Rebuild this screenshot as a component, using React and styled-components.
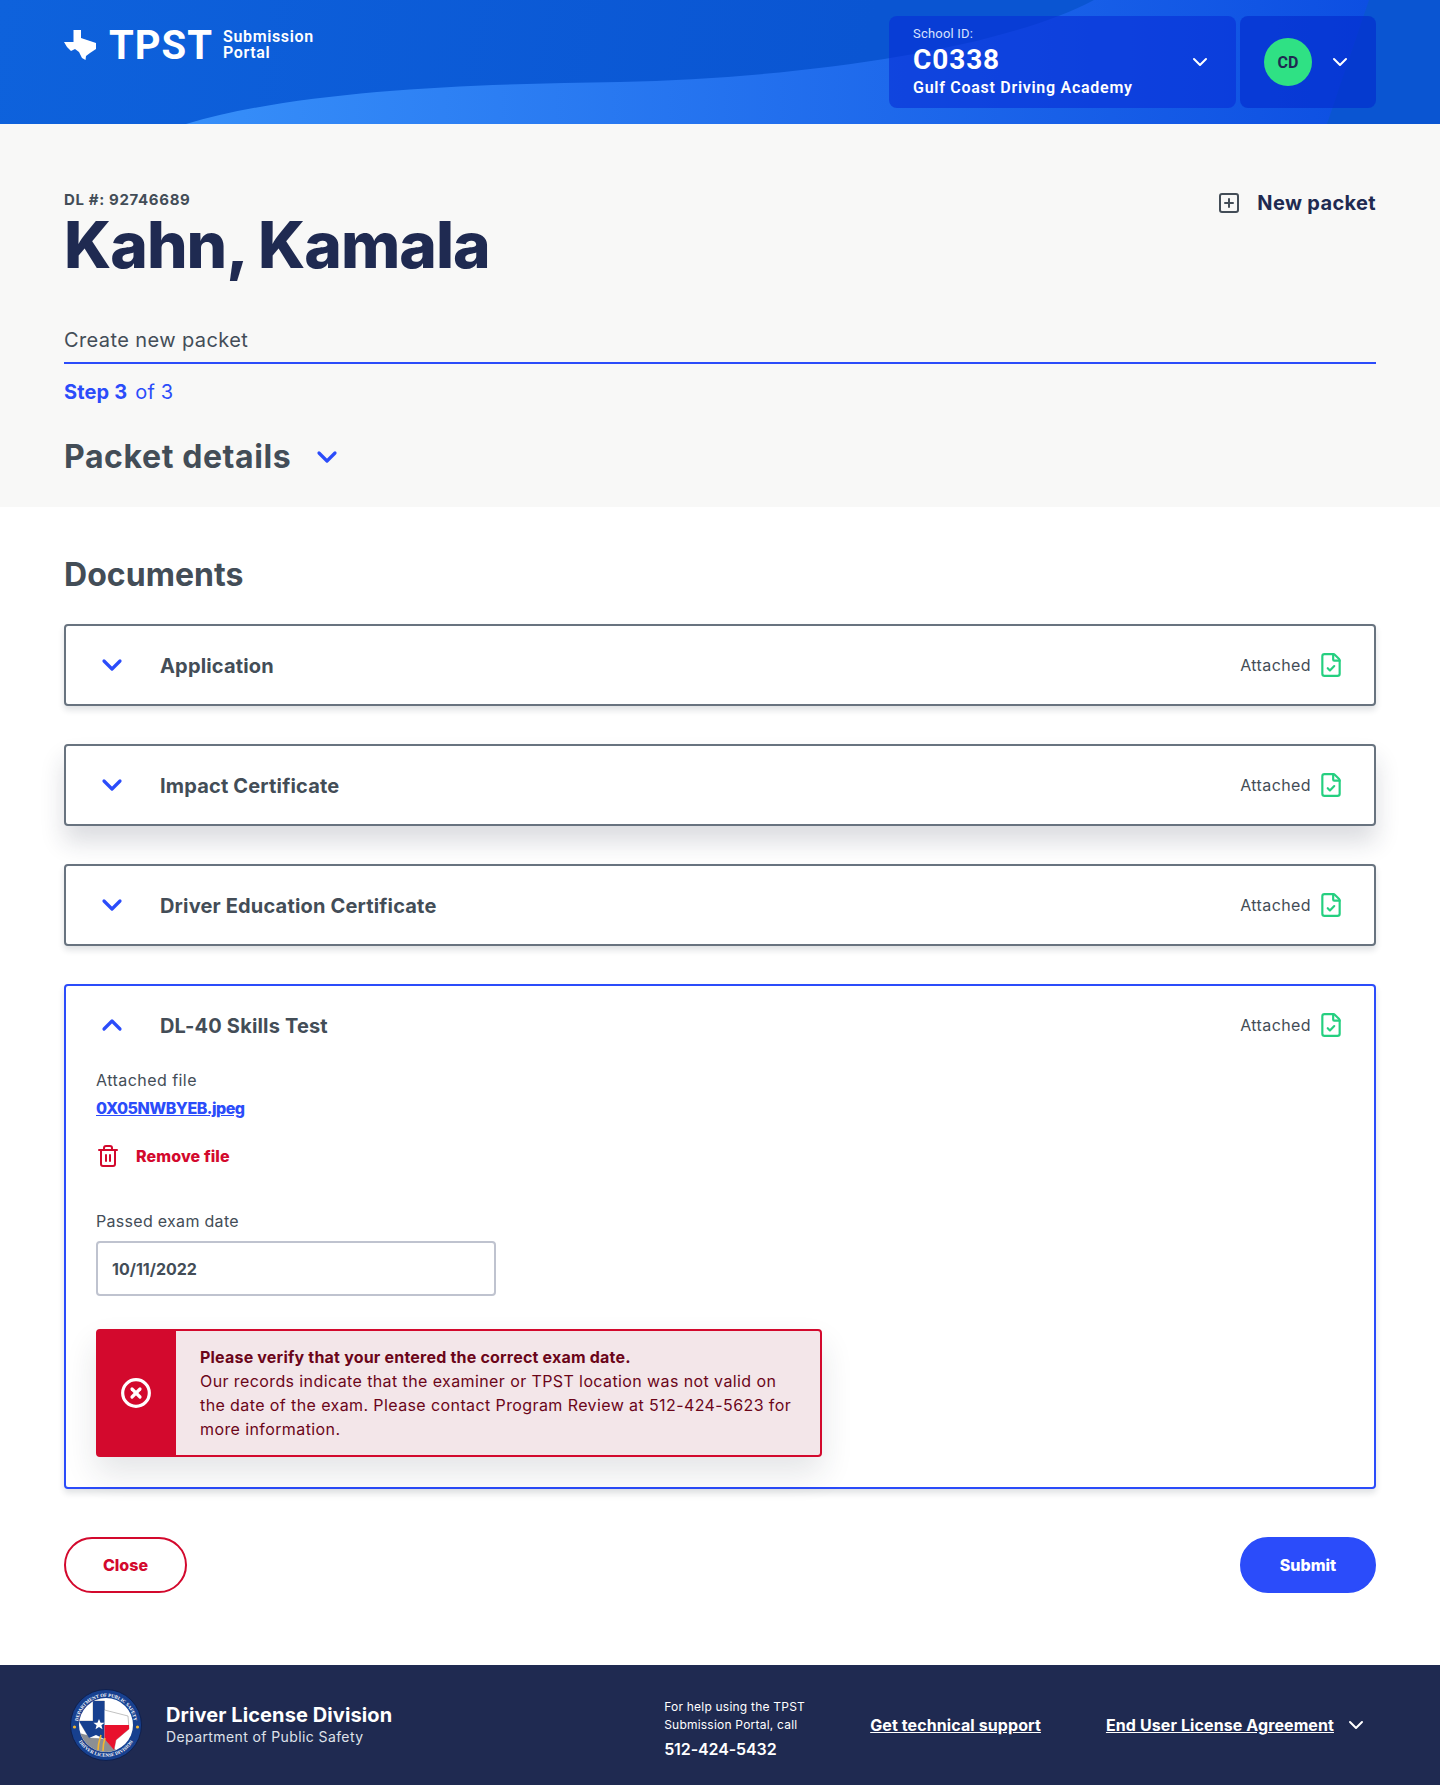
import React from "react"
import styled, { createGlobalStyle } from "styled-components"
import { ChevronDown, ChevronUp, CircleX, FileCheck, SquarePlus, Trash2 } from "lucide-react"

const body = `"Inter", "Liberation Sans", sans-serif`
const plex = `"Roboto", "Liberation Sans", sans-serif`

const Global = createGlobalStyle`
  * { box-sizing: border-box; }
  html, body { margin: 0; padding: 0; background: #fff; }
  body { font-family: ${body}; color: #434d57; }
`

const Page = styled.div`
  width: 1440px;
  height: 1785px;
  display: flex;
  flex-direction: column;
  overflow: hidden;
`

const Header = styled.header`
  position: relative;
  height: 124px;
  flex: none;
  padding: 16px 64px 0;
  display: flex;
  justify-content: space-between;
  align-items: flex-start;
  background: linear-gradient(100deg, #0e62dc 0%, #0a55d2 60%, #0a55d2 100%);
  overflow: hidden;
`

const HeaderWave = styled.svg`
  position: absolute;
  inset: 0;
`

const Logo = styled.div`
  position: relative;
  display: flex;
  align-items: center;
  height: 28px;
  margin-top: 15px;
`

const LogoMark = styled.svg`
  width: 32px;
  height: 30px;
  margin-right: 13px;
  flex: none;
`

const LogoName = styled.div`
  font-family: ${plex};
  font-weight: 700;
  font-size: 40px;
  line-height: 28px;
  color: #fff;
  letter-spacing: 1px;
  padding-top: 2px;
`

const LogoSub = styled.div`
  font-family: ${plex};
  font-weight: 600;
  font-size: 16px;
  line-height: 16px;
  color: #fff;
  margin-left: 10px;
  letter-spacing: 0.65px;
`

const HeaderControls = styled.div`
  position: relative;
  display: flex;
  gap: 4px;
`

const SchoolBox = styled.div`
  width: 347px;
  height: 92px;
  border-radius: 8px;
  background: rgba(8, 46, 214, 0.62);
  padding: 0 24px;
  display: flex;
  justify-content: space-between;
  align-items: center;
  color: #fff;
  font-family: ${plex};
`

const SchoolText = styled.div`
  display: flex;
  flex-direction: column;
  padding-top: 1px;
`

const SchoolLabel = styled.div`
  font-size: 13px;
  line-height: 14px;
  color: #d8e2ff;
  letter-spacing: 0.2px;
`

const SchoolId = styled.div`
  font-size: 28px;
  font-weight: 700;
  line-height: 34px;
  margin-top: 2px;
  letter-spacing: 0.9px;
`

const SchoolName = styled.div`
  font-size: 16px;
  font-weight: 600;
  line-height: 20px;
  margin-top: 1px;
  letter-spacing: 0.72px;
`

const UserBox = styled.div`
  width: 136px;
  height: 92px;
  border-radius: 8px;
  background: rgba(4, 42, 205, 0.62);
  padding-left: 24px;
  display: flex;
  align-items: center;
  gap: 16px;
  color: #fff;
`

const Avatar = styled.div`
  width: 48px;
  height: 48px;
  border-radius: 50%;
  background: #2fe184;
  color: #1f2a51;
  display: flex;
  align-items: center;
  justify-content: center;
  font-family: ${plex};
  font-size: 16px;
  font-weight: 700;
`

const TopSection = styled.section`
  flex: none;
  height: 383px;
  padding: 67px 64px 0;
  background: #f8f8f7;
`

const TitleRow = styled.div`
  display: flex;
  justify-content: space-between;
  align-items: flex-start;
`

const DlNumber = styled.div`
  font-size: 15px;
  font-weight: 700;
  line-height: 18px;
  letter-spacing: 0.65px;
  color: #434d57;
`

const StudentName = styled.h1`
  margin: 0;
  font-size: 64px;
  font-weight: 800;
  line-height: 72px;
  letter-spacing: -1px;
  color: #1f2a51;
`

const NewPacket = styled.div`
  display: flex;
  align-items: center;
  gap: 16px;
  font-size: 20px;
  font-weight: 700;
  letter-spacing: 0.35px;
  color: #1f2a51;
  svg { color: #434d57; }
`

const StepTabs = styled.div`
  margin-top: 42px;
  height: 41px;
  padding-top: 4px;
  border-bottom: 2px solid #2b4cfa;
  font-size: 20px;
  line-height: 26px;
  letter-spacing: 0.4px;
  color: #434d57;
`

const StepLine = styled.div`
  margin-top: 15px;
  font-size: 20px;
  line-height: 26px;
  letter-spacing: 0.15px;
  color: #2b4cfa;
  b { font-weight: 700; margin-right: 8px; }
`

const PacketHeading = styled.div`
  display: flex;
  align-items: center;
  gap: 20px;
  margin-top: 32px;
  font-size: 32px;
  font-weight: 700;
  line-height: 40px;
  letter-spacing: 0.6px;
  color: #434d57;
  svg { color: #2b4cfa; }
`

const Main = styled.main`
  flex: 1;
  padding: 48px 64px 0;
`

const SectionTitle = styled.h2`
  margin: 0 0 29px;
  font-size: 32px;
  font-weight: 700;
  line-height: 40px;
  letter-spacing: 0.05px;
  color: #434d57;
`

const Card = styled.div`
  border: 2px solid ${(p) => (p.$open ? "#2b4cfa" : "#68737f")};
  border-radius: 4px;
  background: #fff;
  margin-bottom: 38px;
  box-shadow: ${(p) => (p.$lifted ? "0 16px 24px rgba(30, 40, 60, 0.16)" : "0 4px 6px rgba(30, 40, 60, 0.14)")};
`

const CardHead = styled.div`
  height: 78px;
  padding: 0 30px;
  display: flex;
  align-items: center;
  gap: 32px;
  color: #2b4cfa;
`

const CardTitle = styled.div`
  flex: 1;
  padding-top: 2px;
  font-size: 20px;
  font-weight: 700;
  letter-spacing: 0.17px;
  color: #434d57;
`

const Status = styled.div`
  display: flex;
  align-items: center;
  gap: 7px;
  font-size: 16px;
  letter-spacing: 0.4px;
  color: #434d57;
  svg { color: #25cf80; }
`

const CardBody = styled.div`
  padding: 6px 30px 30px;
`

const FieldLabel = styled.div`
  font-size: 16px;
  line-height: 20px;
  letter-spacing: ${(p) => p.$spacing || 0.45}px;
  color: #434d57;
`

const FileLink = styled.a`
  display: block;
  margin-top: 8px;
  font-size: 16px;
  font-weight: 800;
  line-height: 20px;
  letter-spacing: -0.5px;
  color: #2b4cfa;
  text-decoration: underline;
`

const RemoveFile = styled.div`
  display: flex;
  align-items: center;
  gap: 16px;
  margin: 26px 0 43px;
  font-size: 16px;
  font-weight: 800;
  letter-spacing: 0.1px;
  color: #d3092d;
`

const DateInput = styled.div`
  width: 400px;
  height: 55px;
  margin-top: 10px;
  padding: 0 14px;
  display: flex;
  align-items: center;
  border: 2px solid #bfc3cf;
  border-radius: 4px;
  font-size: 16px;
  font-weight: 700;
  color: #434d57;
`

const Alert = styled.div`
  width: 726px;
  height: 128px;
  margin-top: 33px;
  display: flex;
  border: 2px solid #d3092d;
  border-radius: 4px;
  background: #f3e6e9;
  box-shadow: 0 16px 32px rgba(30, 40, 60, 0.12);
`

const AlertIcon = styled.div`
  width: 78px;
  flex: none;
  padding-right: 2px;
  background: #d3092d;
  color: #fff;
  display: flex;
  align-items: center;
  justify-content: center;
`

const AlertText = styled.div`
  padding: 14px 24px 0;
  font-size: 16px;
  line-height: 24px;
  letter-spacing: 0.4px;
  white-space: nowrap;
  color: #6b0519;
  b { display: block; font-weight: 700; letter-spacing: 0.2px; }
`

const Actions = styled.div`
  display: flex;
  justify-content: space-between;
  margin-top: 48px;
`

const Button = styled.button`
  height: 56px;
  width: ${(p) => (p.$primary ? "136px" : "123px")};
  border-radius: 28px;
  border: 2px solid ${(p) => (p.$primary ? "#2b4cfa" : "#d3092d")};
  background: ${(p) => (p.$primary ? "#2b4cfa" : "#fff")};
  color: ${(p) => (p.$primary ? "#fff" : "#d3092d")};
  font-family: ${body};
  font-size: 16px;
  font-weight: 800;
`

const Footer = styled.footer`
  flex: none;
  height: 120px;
  padding: 0 72px 0 70px;
  background: #1f2a51;
  display: flex;
  align-items: center;
  color: #fff;
`

const Seal = styled.svg`
  width: 72px;
  height: 72px;
  flex: none;
`

const FooterOrg = styled.div`
  margin-left: 24px;
  flex: 1;
`

const OrgName = styled.div`
  font-size: 20px;
  font-weight: 700;
  line-height: 24px;
  letter-spacing: 0.1px;
`

const OrgSub = styled.div`
  font-size: 14px;
  line-height: 20px;
  letter-spacing: 0.4px;
  color: #dfe2ea;
`

const Help = styled.div`
  width: 206px;
  padding-top: 6px;
  font-size: 12px;
  line-height: 18px;
  letter-spacing: 0.22px;
  b { display: block; margin-top: 5px; font-size: 16px; line-height: 20px; font-weight: 600; letter-spacing: -0.1px; }
`

const FooterLink = styled.a`
  font-size: 16px;
  font-weight: 700;
  letter-spacing: 0.1px;
  color: #fff;
  text-decoration: underline;
  margin-right: ${(p) => p.$gap || 0}px;
`

const documents = [
  { title: "Application" },
  { title: "Impact Certificate", lifted: true },
  { title: "Driver Education Certificate" },
]

const texas = "M9.5 0 L17 0 L17 8 L26 11 L32 13 L32 19 L26 23 L22 26 L21.5 30 L18 28 L15 22 L11 19 L7 21 L3 17 L0 12 L9.5 12 Z"

const Attached = () => (
  <Status>
    Attached
    <FileCheck size={26} strokeWidth={2} />
  </Status>
)

const DocumentCard = ({ title, lifted }) => (
  <Card $lifted={lifted}>
    <CardHead>
      <ChevronDown size={32} strokeWidth={2.4} />
      <CardTitle>{title}</CardTitle>
      <Attached />
    </CardHead>
  </Card>
)

const DpsSeal = () => (
  <Seal viewBox="0 0 72 72">
    <defs>
      <clipPath id="sealInner">
        <circle cx="36" cy="36" r="27" />
      </clipPath>
      <path id="sealTop" d="M7.8 36 A28.2 28.2 0 0 1 64.2 36" />
      <path id="sealBottom" d="M4.2 36 A31.8 31.8 0 0 0 67.8 36" />
    </defs>
    <circle cx="36" cy="36" r="35.5" fill="#17408f" stroke="#10204d" />
    <circle cx="36" cy="36" r="27" fill="#fff" />
    <g clipPath="url(#sealInner)">
      <path d="M9 44 L36 51 L46 61 L46 72 L9 72 Z" fill="#8c8f93" />
      <path d="M23 12 L34.5 12 L34.5 21 L58 27 L59 40 L46 51 L44 61 L38 54 L34.5 50 L19 49 L9 32 L23 32 Z" fill="#fff" stroke="#666" strokeWidth="0.4" />
      <path d="M23 12 L34.5 12 L34.5 50 L26 46 L19 49 L9 32 L23 32 Z" fill="#17408f" />
      <path d="M34.5 36 L59 36 L59 40 L46 51 L44 61 L38 54 L34.5 50 Z" fill="#e8112d" />
      <path d="M28 61 C28 54 30 50 31 46 M33 62 C33 56 34 52 35 49" stroke="#f2b632" strokeWidth="1.6" fill="none" />
    </g>
    <path d="M29 30 L30.6 33.8 L34.6 33.8 L31.4 36.3 L32.5 40.2 L29 38 L25.5 40.2 L26.6 36.3 L23.4 33.8 L27.4 33.8 Z" fill="#fff" />
    <circle cx="4.5" cy="38" r="1.6" fill="#f2b632" />
    <circle cx="67.5" cy="38" r="1.6" fill="#f2b632" />
    <text fontFamily="Liberation Serif, serif" fontSize="4.8" fontWeight="700" fill="#fff">
      <textPath href="#sealTop" startOffset="50%" textAnchor="middle">DEPARTMENT OF PUBLIC SAFETY</textPath>
    </text>
    <text fontFamily="Liberation Serif, serif" fontSize="4.8" fontWeight="700" fill="#fff">
      <textPath href="#sealBottom" startOffset="50%" textAnchor="middle">DRIVER LICENSE DIVISION</textPath>
    </text>
  </Seal>
)

export default function App() {
  return (
    <Page>
      <Global />
      <Header>
        <HeaderWave width="1440" height="124" viewBox="0 0 1440 124">
          <defs>
            <linearGradient id="wave" x1="0" y1="0" x2="1" y2="0">
              <stop offset="0" stopColor="#378ff9" />
              <stop offset="1" stopColor="#0d4fe2" />
            </linearGradient>
          </defs>
          <path d="M186 124 C300 90 470 84 620 82 C800 78 1000 50 1094 0 L1369 0 L1327 124 Z" fill="url(#wave)" />
        </HeaderWave>
        <Logo>
          <LogoMark viewBox="0 0 32 30">
            <path d={texas} fill="#fff" />
          </LogoMark>
          <LogoName>TPST</LogoName>
          <LogoSub>
            Submission
            <br />
            Portal
          </LogoSub>
        </Logo>
        <HeaderControls>
          <SchoolBox>
            <SchoolText>
              <SchoolLabel>School ID:</SchoolLabel>
              <SchoolId>C0338</SchoolId>
              <SchoolName>Gulf Coast Driving Academy</SchoolName>
            </SchoolText>
            <ChevronDown size={24} strokeWidth={2} />
          </SchoolBox>
          <UserBox>
            <Avatar>CD</Avatar>
            <ChevronDown size={24} strokeWidth={2} />
          </UserBox>
        </HeaderControls>
      </Header>

      <TopSection>
        <TitleRow>
          <div>
            <DlNumber>DL #: 92746689</DlNumber>
            <StudentName>Kahn, Kamala</StudentName>
          </div>
          <NewPacket>
            <SquarePlus size={24} strokeWidth={2} />
            New packet
          </NewPacket>
        </TitleRow>
        <StepTabs>Create new packet</StepTabs>
        <StepLine>
          <b>Step 3</b>of 3
        </StepLine>
        <PacketHeading>
          Packet details
          <ChevronDown size={32} strokeWidth={2.4} />
        </PacketHeading>
      </TopSection>

      <Main>
        <SectionTitle>Documents</SectionTitle>
        {documents.map((doc) => (
          <DocumentCard key={doc.title} title={doc.title} lifted={doc.lifted} />
        ))}
        <Card $open>
          <CardHead>
            <ChevronUp size={32} strokeWidth={2.4} />
            <CardTitle>DL-40 Skills Test</CardTitle>
            <Attached />
          </CardHead>
          <CardBody>
            <FieldLabel>Attached file</FieldLabel>
            <FileLink>0X05NWBYEB.jpeg</FileLink>
            <RemoveFile>
              <Trash2 size={24} strokeWidth={2} />
              Remove file
            </RemoveFile>
            <FieldLabel $spacing={0.3}>Passed exam date</FieldLabel>
            <DateInput>10/11/2022</DateInput>
            <Alert>
              <AlertIcon>
                <CircleX size={32} strokeWidth={2.4} />
              </AlertIcon>
              <AlertText>
                <b>Please verify that your entered the correct exam date.</b>
                Our records indicate that the examiner or TPST location was not valid on
                <br />
                the date of the exam. Please contact Program Review at 512-424-5623 for
                <br />
                more information.
              </AlertText>
            </Alert>
          </CardBody>
        </Card>
        <Actions>
          <Button>Close</Button>
          <Button $primary>Submit</Button>
        </Actions>
      </Main>

      <Footer>
        <DpsSeal />
        <FooterOrg>
          <OrgName>Driver License Division</OrgName>
          <OrgSub>Department of Public Safety</OrgSub>
        </FooterOrg>
        <Help>
          For help using the TPST
          <br />
          Submission Portal, call
          <b>512-424-5432</b>
        </Help>
        <FooterLink $gap={65}>Get technical support</FooterLink>
        <FooterLink $gap={10}>End User License Agreement</FooterLink>
        <ChevronDown size={24} strokeWidth={2} />
      </Footer>
    </Page>
  )
}
